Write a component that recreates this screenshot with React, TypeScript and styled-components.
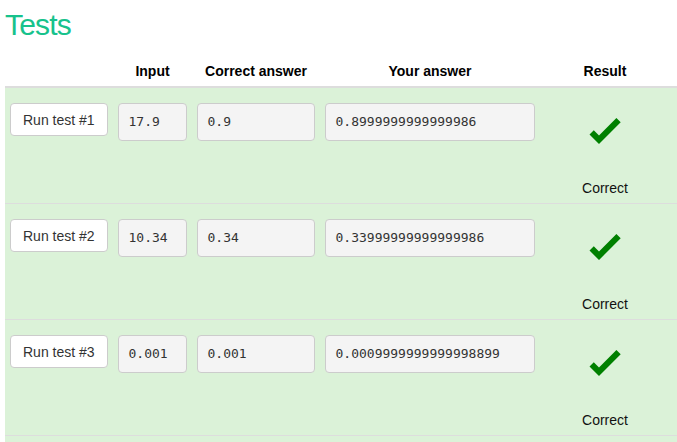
import React from "react";
import styled, { createGlobalStyle } from "styled-components";

const Global = createGlobalStyle`
  html, body { margin: 0; padding: 0; background: #fff; }
  body { font-family: "Liberation Sans", Arial, Helvetica, sans-serif; color: #333; font-size: 14px; }
`;

const Page = styled.div`
  padding: 8px 0 0 5px;
`;

const Title = styled.h2`
  margin: 0;
  font-size: 30px;
  line-height: 33px;
  font-weight: 400;
  letter-spacing: -0.8px;
  color: #17c28c;
`;

const COLS = "108px 79px 128px 220px 130px 1fr";

const HeaderRow = styled.div`
  display: grid;
  grid-template-columns: ${COLS};
  height: 47px;
  align-items: end;
  border-bottom: 2px solid #ddd;
  box-sizing: border-box;
`;

const HeaderCell = styled.div`
  font-weight: 700;
  font-size: 14px;
  line-height: 20px;
  color: #000;
  text-align: center;
  padding-bottom: 5px;
`;

const Row = styled.div<{ $first?: boolean }>`
  display: grid;
  grid-template-columns: ${COLS};
  align-items: start;
  height: ${(p) => (p.$first ? "115px" : "116px")};
  box-sizing: border-box;
  background: #dbf2d8;
  border-top: ${(p) => (p.$first ? "none" : "1px solid #ddd")};
  padding-top: 15px;
`;

const Filler = styled.div`
  height: 12px;
  background: #dbf2d8;
  border-top: 1px solid #ddd;
`;

const Cell = styled.div`
  padding: 0 5px;
  min-width: 0;
`;

const RunButton = styled.button`
  height: 33px;
  padding: 0 12px;
  background: #fff;
  border: 1px solid #ccc;
  border-radius: 4px;
  font-family: "Liberation Sans", Arial, sans-serif;
  font-size: 14px;
  color: #333;
  white-space: nowrap;
  cursor: pointer;
`;

const Pre = styled.pre`
  margin: 0;
  height: 38px;
  box-sizing: border-box;
  padding: 0 9.5px;
  line-height: 36px;
  background: #f4f4f4;
  border: 1px solid #ccc;
  border-radius: 4px;
  font-family: "DejaVu Sans Mono", Menlo, monospace;
  font-size: 13px;
  color: #333;
  overflow: hidden;
`;

const ResultCell = styled.div`
  display: flex;
  flex-direction: column;
  align-items: center;
  padding-top: 13px;
`;

const ResultText = styled.div`
  margin-top: 34px;
  font-size: 14px;
  line-height: 20px;
  color: #111;
`;

const Check = () => (
  <svg width="32" height="28" viewBox="0 0 32 28">
    <polygon points="0.5,18.5 4.8,14.2 10,19.4 27.4,2 31.7,6.3 10,28" fill="#008000" />
  </svg>
);

const tests = [
  { n: 1, input: "17.9", correct: "0.9", yours: "0.8999999999999986" },
  { n: 2, input: "10.34", correct: "0.34", yours: "0.33999999999999986" },
  { n: 3, input: "0.001", correct: "0.001", yours: "0.0009999999999998899" },
];

export default function App() {
  return (
    <Page>
      <Global />
      <Title>Tests</Title>
      <HeaderRow>
        <HeaderCell />
        <HeaderCell>Input</HeaderCell>
        <HeaderCell>Correct answer</HeaderCell>
        <HeaderCell>Your answer</HeaderCell>
        <HeaderCell>Result</HeaderCell>
        <HeaderCell />
      </HeaderRow>
      {tests.map((t, i) => (
        <Row key={t.n} $first={i === 0}>
          <Cell>
            <RunButton>Run test #{t.n}</RunButton>
          </Cell>
          <Cell>
            <Pre>{t.input}</Pre>
          </Cell>
          <Cell>
            <Pre>{t.correct}</Pre>
          </Cell>
          <Cell>
            <Pre>{t.yours}</Pre>
          </Cell>
          <ResultCell>
            <Check />
            <ResultText>Correct</ResultText>
          </ResultCell>
          <Cell />
        </Row>
      ))}
      <Filler />
    </Page>
  );
}
